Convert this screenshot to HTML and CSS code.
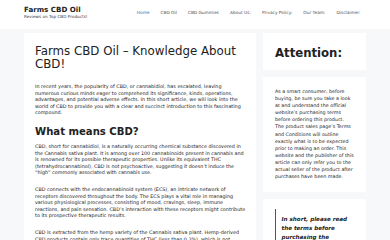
FILE: index.html
```html
<!DOCTYPE html>
<html lang="en">

<head>
    <meta charset="UTF-8">
    <meta name="viewport" content="width=device-width, initial-scale=1.0">
    <title>Farms CBD Oil – Knowledge About CBD!</title>

    <link rel="stylesheet" href="styles.css">
</head>

<body>

    <header class="site-header">
        <div class="inside-header">
            <div class="site-branding">
                <p class="main-title">Farms CBD Oil</p>
                <p class="site-description">Reviews on Top CBD Products!</p>
            </div>

            <!-- menu principal -->
            <nav class="main-nav">
                <a class="current" href="#">Home</a>
                <a href="#">CBD Oil</a>
                <a href="#">CBD Gummies</a>
                <a href="#">About Us:</a>
                <a href="#">Privacy Policy:</a>
                <a href="#">Our Team:</a>
                <a href="#">Disclaimer:</a>
            </nav>
        </div>
    </header>

    <div class="site-content">

        <main class="content-area">
            <article class="entry">
                <h1 class="entry-title">Farms CBD Oil – Knowledge About CBD!</h1>

                <p>In recent years, the popularity of CBD, or cannabidiol, has escalated, leaving numerous curious minds eager to comprehend its significance, kinds, operations, advantages, and potential adverse effects. In this short article, we will look into the world of CBD to provide you with a clear and succinct introduction to this fascinating compound.</p>

                <h2>What means CBD?</h2>

                <p>CBD, short for cannabidiol, is a naturally occurring chemical substance discovered in the Cannabis sativa plant. It is among over 100 cannabinoids present in cannabis and is renowned for its possible therapeutic properties. Unlike its equivalent THC (tetrahydrocannabinol), CBD is not psychoactive, suggesting it doesn’t induce the “high” commonly associated with cannabis use.</p>

                <p>CBD connects with the endocannabinoid system (ECS), an intricate network of receptors discovered throughout the body. The ECS plays a vital role in managing various physiological processes, consisting of mood, cravings, sleep, immune reactions, and pain sensation. CBD’s interaction with these receptors might contribute to its prospective therapeutic results.</p>

                <p>CBD is extracted from the hemp variety of the Cannabis sativa plant. Hemp-derived CBD products contain only trace quantities of THC (less than 0.3%), which is not enough to cause any intoxication.</p>
            </article>
        </main>

        <aside class="sidebar">
            <section class="widget">
                <h2 class="widget-title">Attention:</h2>
            </section>

            <section class="widget">
                <p>As a smart consumer, before buying, be sure you take a look at and understand the official website’s purchasing terms before ordering this product. The product sales page’s Terms and Conditions will outline exactly what is to be expected prior to making an order. This website and the publisher of this article can only refer you to the actual seller of the product after purchases have been made.</p>
            </section>

            <section class="widget">
                <blockquote>
                    <p>In short, please read the terms before purchasing the product so you know what you are buying.</p>
                </blockquote>
            </section>
        </aside>

    </div>

</body>

</html>
```

FILE: styles.css
```css
html {
    overflow: hidden;
}

body {
    margin: 0;
    padding: 0;
    background-color: #f7f8f9;
    color: #222222;
    font-family: "DejaVu Sans", sans-serif;
    font-size: 4.85px;
    line-height: 6.6px;
}

p {
    margin: 0 0 10px;
}

a {
    text-decoration: none;
}

/* cabeçalho */

.site-header {
    background-color: #ffffff;
}

.inside-header {
    width: 342px;
    margin: 0 auto;
    padding: 6px 0 8px;
    display: flex;
    align-items: center;
    justify-content: space-between;
}

.main-title {
    margin: 0;
    font-size: 7.1px;
    line-height: 8.4px;
    font-weight: 700;
}

.site-description {
    margin: 0;
    font-size: 4.2px;
    line-height: 6.6px;
    color: #3a3a3a;
}

.main-nav {
    display: flex;
}

.main-nav a {
    padding: 0 5.5px;
    font-size: 4.3px;
    color: #515151;
}

.main-nav a.current {
    color: #1e73be;
}

/* conteúdo */

.site-content {
    width: 342px;
    margin: 4px auto 0;
    display: grid;
    grid-template-columns: 232px 103px;
    gap: 7px;
    align-items: start;
}

.content-area {
    background-color: #ffffff;
    padding: 12px 9px 12px 11px;
}

.entry-title {
    margin: 0 0 13px;
    font-size: 11.8px;
    line-height: 12.5px;
    font-weight: 400;
}

.entry h2 {
    margin: 1px 0 6px;
    font-size: 10.1px;
    line-height: 11px;
    font-weight: 700;
}

/* barra lateral */

.widget {
    background-color: #ffffff;
    padding: 11px 11.7px 11.4px 12px;
    margin-bottom: 7px;
    font-size: 4.8px;
    line-height: 7.1px;
}

.widget p {
    margin: 0;
}

.widget-title {
    margin: 0;
    font-size: 11.7px;
    line-height: 14px;
    font-weight: 700;
}

.widget:first-child {
    padding-top: 13px;
    padding-bottom: 10px;
}

.widget:last-child {
    padding-top: 10px;
}

blockquote {
    margin: 0;
    padding: 6.6px 6px 6px 5.5px;
    border-left: 1.5px solid #555555;
    font-size: 5.6px;
    line-height: 8.7px;
    font-style: italic;
    font-weight: 700;
}
```
